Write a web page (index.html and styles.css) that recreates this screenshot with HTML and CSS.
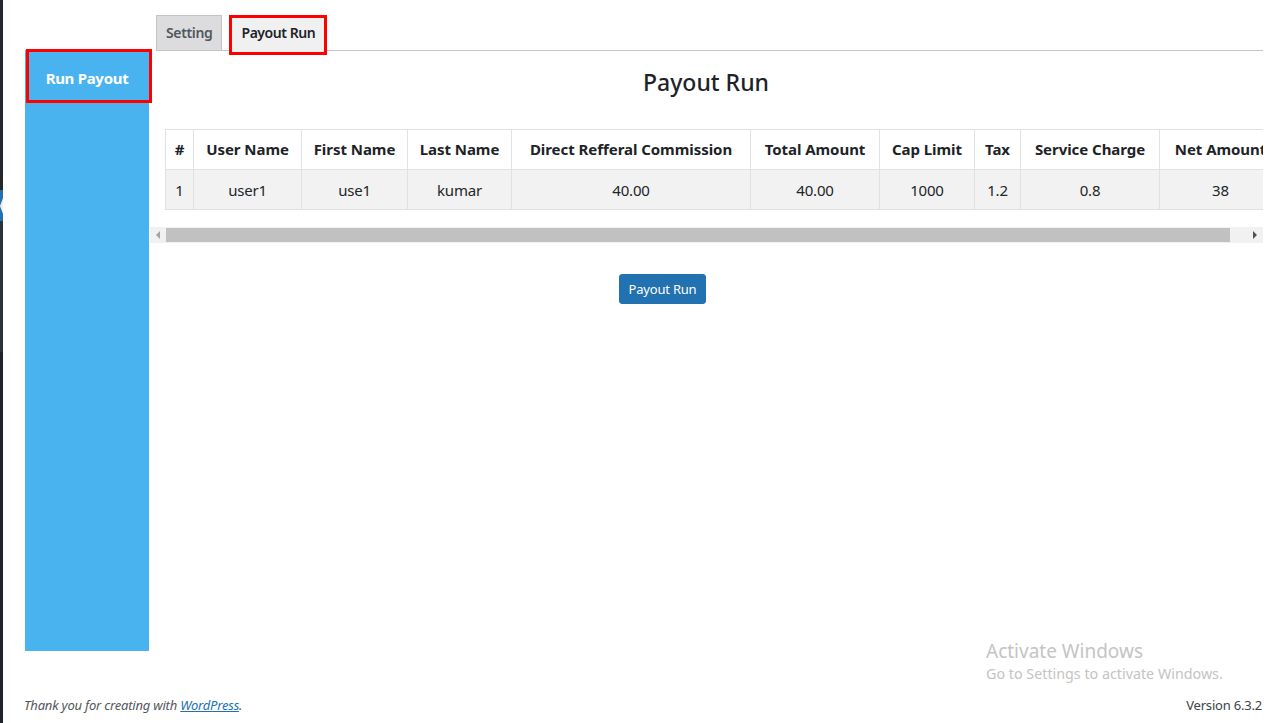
FILE: index.html
```html
<!DOCTYPE html>
<html lang="en">
<head>
<meta charset="utf-8">
<title>Payout Run</title>
<link rel="stylesheet" href="styles.css">
</head>
<body>
<div class="admin-strip">
  <div class="strip-top"></div>
  <div class="strip-current"><span class="strip-arrow"></span></div>
  <div class="strip-sub"></div>
  <div class="strip-bottom"></div>
</div>
<div class="page">
  <div class="wrap">
    <aside class="sidebar">
      <div class="side-item">Run Payout</div>
    </aside>
    <main class="content">
      <nav class="tabs">
        <a class="tab">Setting</a>
        <a class="tab tab-active">Payout Run</a>
      </nav>
      <h1 class="title">Payout Run</h1>
      <div class="table-scroll">
        <div class="table-clip">
          <table class="data">
            <colgroup>
              <col class="c1"><col class="c2"><col class="c3"><col class="c4"><col class="c5"><col class="c6"><col class="c7"><col class="c8"><col class="c9"><col class="c10">
            </colgroup>
            <thead>
              <tr><th>#</th><th>User Name</th><th>First Name</th><th>Last Name</th><th>Direct Refferal Commission</th><th>Total Amount</th><th>Cap Limit</th><th>Tax</th><th>Service Charge</th><th>Net Amount</th></tr>
            </thead>
            <tbody>
              <tr><td>1</td><td>user1</td><td>use1</td><td>kumar</td><td>40.00</td><td>40.00</td><td>1000</td><td>1.2</td><td>0.8</td><td>38</td></tr>
            </tbody>
          </table>
        </div>
        <div class="fake-scrollbar">
          <span class="sb-btn"><span class="arrow-left"></span></span>
          <span class="sb-track"><span class="sb-thumb"></span></span>
          <span class="sb-btn"><span class="arrow-right"></span></span>
        </div>
      </div>
      <div class="btn-row">
        <button class="btn-primary">Payout Run</button>
      </div>
    </main>
  </div>
  <footer class="footer">
    <p class="thanks">Thank you for creating with <a href="#">WordPress</a>.</p>
    <p class="version">Version 6.3.2</p>
  </footer>
</div>
<div class="activate">
  <div class="act-title">Activate Windows</div>
  <div class="act-sub">Go to Settings to activate Windows.</div>
</div>
</body>
</html>
```
FILE: styles.css
```css
html, body {
  margin: 0;
  padding: 0;
  height: 100%;
}
body {
  display: flex;
  background: #ffffff;
  font-family: "Noto Sans", "Open Sans", sans-serif;
  color: #1d2327;
  overflow: hidden;
  width: 1282px;
  height: 723px;
  position: relative;
}
.admin-strip {
  width: 3px;
  flex: none;
  display: flex;
  flex-direction: column;
  height: 723px;
}
.strip-top { height: 190px; background: #23282d; }
.strip-current {
  height: 31px;
  background: #2271b1;
  display: flex;
  align-items: center;
  justify-content: flex-end;
}
.strip-arrow {
  width: 0;
  height: 0;
  border-top: 8px solid transparent;
  border-bottom: 8px solid transparent;
  border-right: 3px solid #f0f0f1;
}
.strip-sub { height: 131px; background: #2c3338; }
.strip-bottom { flex: 1; background: #1d2327; }

.page {
  flex: 1;
  display: flex;
  flex-direction: column;
  padding-left: 22px;
}
.wrap {
  display: flex;
  height: 690px;
}
.sidebar {
  width: 124px;
  flex: none;
  margin-top: 50px;
  height: 601px;
  background: #49b3ef;
}
.side-item {
  box-sizing: border-box;
  width: 126px;
  height: 54px;
  margin-top: -1px;
  margin-left: 1px;
  padding-top: 3px;
  padding-right: 4px;
  border: 3px solid #ff0000;
  color: #ffffff;
  font-weight: 700;
  font-size: 15px;
  display: flex;
  align-items: center;
  justify-content: center;
  letter-spacing: -0.3px;
}
.content {
  width: 1114px;
  flex: none;
  padding-top: 15px;
}
.tabs {
  display: flex;
  align-items: flex-start;
  border-bottom: 1px solid #c3c4c7;
  margin-left: 7px;
  height: 35px;
}
.tab {
  box-sizing: border-box;
  height: 36px;
  padding: 0 9px;
  border: 1px solid #c3c4c7;
  background: #dcdcde;
  color: #50575e;
  font-size: 14px;
  font-weight: 600;
  line-height: 33px;
  margin-right: 7px;
  letter-spacing: -0.35px;
}
.tab-active {
  height: 40px;
  border: 3px solid #ff0000;
  background: #f0f0f1;
  color: #1d2327;
  padding: 0 9px;
  line-height: 29px;
  letter-spacing: -0.45px;
  position: relative;
  z-index: 1;
}
.title {
  margin: 15px 0 0;
  text-align: center;
  font-size: 23px;
  font-weight: 500;
  line-height: 33px;
  color: #1d2327;
}
.table-scroll {
  margin-top: 30px;
  margin-left: 1px;
}
.table-clip {
  overflow: hidden;
  padding-left: 15px;
  padding-bottom: 17px;
}
.data {
  border-collapse: collapse;
  table-layout: fixed;
  width: 1116px;
  font-size: 15px;
  color: #212529;
}
.c1 { width: 28px; }
.c2 { width: 108px; }
.c3 { width: 106px; }
.c4 { width: 104px; }
.c5 { width: 239px; }
.c6 { width: 129px; }
.c7 { width: 95px; }
.c8 { width: 46px; }
.c9 { width: 139px; }
.c10 { width: 122px; }
.data th, .data td {
  border: 1px solid #dee2e6;
  text-align: center;
  white-space: nowrap;
  overflow: hidden;
  padding: 0 6px;
  height: 39px;
}
.data th {
  font-weight: 700;
  font-size: 15px;
  letter-spacing: -0.05px;
  color: #1d2327;
  height: 37px;
  padding-bottom: 2px;
}
.data tbody tr { background: #f2f2f2; }
.data td { font-weight: 400; letter-spacing: -0.2px; }

.fake-scrollbar {
  display: flex;
  height: 16px;
  background: #f1f1f1;
}
.sb-btn {
  width: 16px;
  flex: none;
  display: flex;
  align-items: center;
  justify-content: center;
}
.arrow-left {
  width: 0; height: 0;
  border-top: 4px solid transparent;
  border-bottom: 4px solid transparent;
  border-right: 4px solid #a3a3a3;
}
.arrow-right {
  width: 0; height: 0;
  border-top: 4px solid transparent;
  border-bottom: 4px solid transparent;
  border-left: 4px solid #505050;
}
.sb-track {
  flex: 1;
  display: flex;
  align-items: center;
}
.sb-thumb {
  width: 1064px;
  height: 14px;
  background: #c1c1c1;
}
.btn-row {
  display: flex;
  padding-left: 470px;
  margin-top: 31px;
}
.btn-primary {
  font-family: "Noto Sans", "Open Sans", sans-serif;
  font-size: 13px;
  color: #ffffff;
  background: #2271b1;
  border: 1px solid #2271b1;
  border-radius: 3px;
  width: 87px;
  height: 30px;
  padding: 0;
  letter-spacing: -0.2px;
}
.footer {
  display: flex;
  justify-content: space-between;
  align-items: center;
  width: 1238px;
  margin-left: -1px;
  height: 30px;
  font-size: 13px;
  color: #50575e;
  letter-spacing: -0.2px;
}
.footer p { margin: 0; }
.thanks { font-style: italic; }
.thanks a { color: #2271b1; }
.version { color: #3c434a; }

.activate {
  position: absolute;
  left: 986px;
  top: 638px;
  color: #c4c4c4;
  font-family: "Noto Sans", "Open Sans", sans-serif;
}
.act-title { font-size: 19px; line-height: 26px; }
.act-sub { font-size: 14.3px; line-height: 20px; }
```
